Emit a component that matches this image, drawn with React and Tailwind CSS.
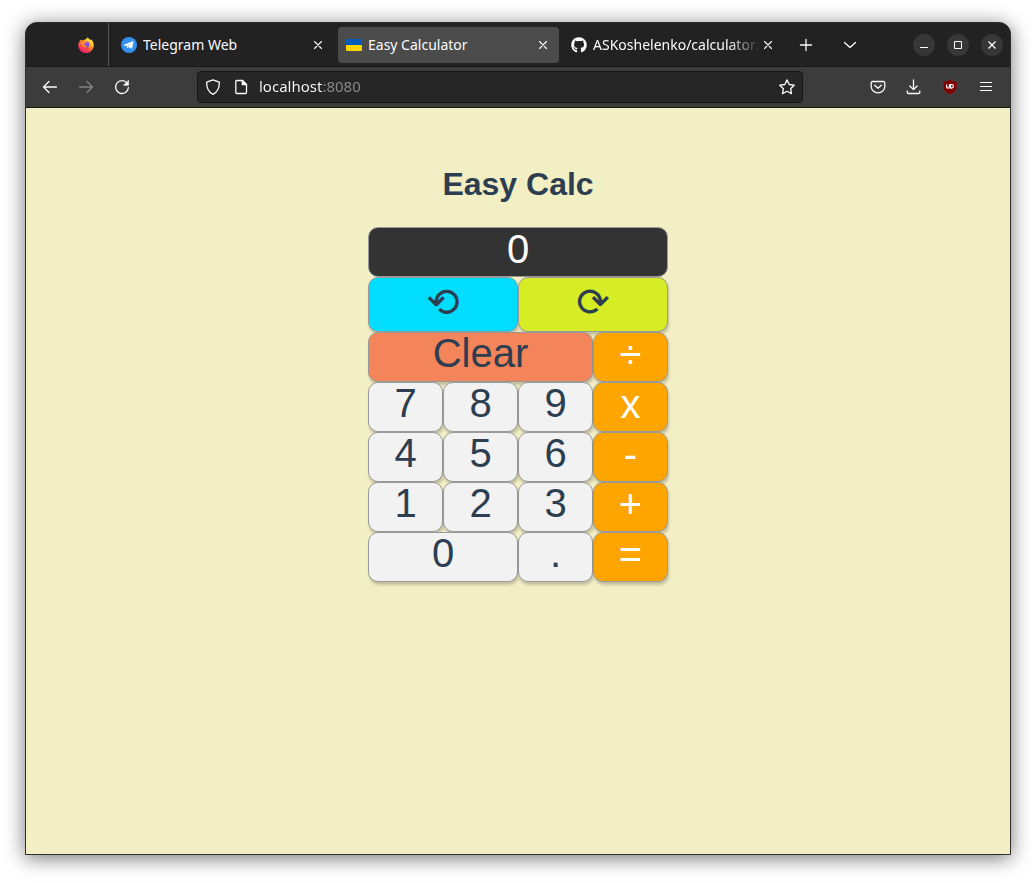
import { FaGithub } from "react-icons/fa";

const digit = "bg-[#f2f2f2] text-[#2c3e50] leading-10";
const operator = "bg-[#ffa500] text-white leading-[42px]";

const keys = [
  { label: "Clear", className: "col-span-3 bg-[#f48459] text-[#2c3e50] leading-10" },
  { label: "÷", className: operator },
  { label: "7", className: digit },
  { label: "8", className: digit },
  { label: "9", className: digit },
  { label: "x", className: operator },
  { label: "4", className: digit },
  { label: "5", className: digit },
  { label: "6", className: digit },
  { label: "-", className: operator },
  { label: "1", className: digit },
  { label: "2", className: digit },
  { label: "3", className: digit },
  { label: "+", className: operator },
  { label: "0", className: "col-span-2 bg-[#f2f2f2] text-[#2c3e50] leading-10" },
  { label: ".", className: digit },
  { label: "=", className: operator },
];

function Line({ children, size = 16, className = "" }) {
  return (
    <svg
      width={size}
      height={size}
      viewBox="0 0 16 16"
      fill="none"
      stroke="currentColor"
      strokeWidth="1.3"
      strokeLinecap="round"
      strokeLinejoin="round"
      aria-hidden="true"
      className={`shrink-0 ${className}`}
    >
      {children}
    </svg>
  );
}

function FirefoxLogo() {
  return (
    <svg width="16" height="16" viewBox="0 0 16 16" aria-hidden="true">
      <defs>
        <linearGradient id="flame" x1="0.85" y1="0.05" x2="0.25" y2="0.95">
          <stop offset="0" stopColor="#fff14a" />
          <stop offset="0.35" stopColor="#ffb62b" />
          <stop offset="0.62" stopColor="#ff5a36" />
          <stop offset="1" stopColor="#f0147a" />
        </linearGradient>
        <radialGradient id="globe" cx="0.6" cy="0.3" r="0.8">
          <stop offset="0" stopColor="#9a4dff" />
          <stop offset="1" stopColor="#5b3bd1" />
        </radialGradient>
      </defs>
      <path
        d="M10 0.200c.5 1.400 1.500 2 2.600 3 .3-.4.2-.8.1-1.200 1.900 1.500 3.100 3.900 3.100 6.400a7.800 7.600 0 0 1-15.600.2c0-2 .6-3.500 1.600-4.700l.2-1.400 1.300 1c.7-.2 1.400-.2 2 0 .7-.8 1.500-1.200 2.300-1.300C8.600 1.700 9.200.9 10 .2z"
        fill="url(#flame)"
      />
      <circle cx="8.300" cy="7.600" r="3" fill="url(#globe)" />
      <path
        d="M2.800 4.200c1.500-.7 2.500-.3 3.300.3l2.500.6c0 1-1 1.200-1.800 1.500-.5.2-.6.7-.5 1.200.7 1.500 2.400.8 3.300.7-.7 1.700-3.500 2.300-4.900.7C3.300 7.900 3 6 2.800 4.200z"
        fill="#ff8a26"
      />
    </svg>
  );
}

function TelegramLogo() {
  return (
    <svg width="16" height="16" viewBox="0 0 16 16" aria-hidden="true" className="shrink-0">
      <circle cx="8" cy="8" r="8" fill="#3390ec" />
      <path
        d="M3 7.800 11.600 4.200c.6-.2.900.1.800.7l-1.300 6.300c-.1.600-.5.700-1 .4L7.900 10l-1.200 1.100c-.2.200-.5.100-.6-.2l-.5-2L3 8.400c-.4-.1-.4-.4 0-.6z"
        fill="#fff"
      />
      <path d="M6.100 10.400 6.300 8.800 10.200 5.900 7.200 9.400z" fill="#3390ec" opacity="0.55" />
    </svg>
  );
}

function FlagIcon() {
  return (
    <svg width="16" height="16" viewBox="0 0 16 16" aria-hidden="true" className="shrink-0">
      <path d="M1 2h14a1 1 0 0 1 1 1v5H0V3a1 1 0 0 1 1-1z" fill="#005bbb" />
      <path d="M0 8h16v5a1 1 0 0 1-1 1H1a1 1 0 0 1-1-1z" fill="#ffd500" />
    </svg>
  );
}

function Tab({ icon, title, active = false, fade = false }) {
  return (
    <div
      className={`flex h-9 max-w-[221px] min-w-0 flex-1 items-center rounded pr-2 pl-2 ${active ? "bg-[#4b4b4b]" : ""}`}
    >
      <button type="button" className="flex min-w-0 flex-1 items-center gap-[6px] text-left">
        {icon}
        <span
          className={`min-w-0 flex-1 overflow-hidden whitespace-nowrap ${fade ? "[mask-image:linear-gradient(to_left,transparent,black_32px)]" : ""}`}
        >
          {title}
        </span>
      </button>
      <button type="button" aria-label={`Close ${title}`} className="grid h-4 w-4 place-items-center">
        <Line size={16}>
          <path d="M4.500 4.500l7 7M11.500 4.500l-7 7" strokeWidth="1.100" />
        </Line>
      </button>
    </div>
  );
}

function ToolButton({ label, children, className = "" }) {
  return (
    <button type="button" aria-label={label} className={`grid h-8 w-9 place-items-center ${className}`}>
      {children}
    </button>
  );
}

function WindowButton({ label, children }) {
  return (
    <button type="button" aria-label={label} className="grid h-[22px] w-[22px] place-items-center rounded-full bg-[#373737]">
      <svg width="16" height="16" viewBox="0 0 16 16" fill="none" stroke="#fff" aria-hidden="true">
        {children}
      </svg>
    </button>
  );
}

function TabBar() {
  return (
    <div className="flex h-11 items-center border-b border-[#171717] bg-[#222222]">
      <div className="flex h-full w-[83px] shrink-0 items-center justify-end border-r border-[#575757] pr-[14px]">
        <FirefoxLogo />
      </div>
      <div className="flex min-w-0 flex-1 items-center gap-1 pl-1">
        <Tab icon={<TelegramLogo />} title="Telegram Web" />
        <Tab icon={<FlagIcon />} title="Easy Calculator" active />
        <Tab
          icon={<FaGithub size={16} className="shrink-0" aria-hidden="true" />}
          title="ASKoshelenko/calculator:"
          fade
        />
        <button type="button" aria-label="New tab" className="grid h-9 w-9 shrink-0 place-items-center">
          <Line>
            <path d="M8 2.500v11M2.500 8h11" />
          </Line>
        </button>
        <button type="button" aria-label="List all tabs" className="ml-1 grid h-9 w-9 shrink-0 place-items-center">
          <Line>
            <path d="M2.500 5.500 8 10.500l5.500-5" />
          </Line>
        </button>
      </div>
      <div className="flex shrink-0 gap-3 pr-[7px]">
        <WindowButton label="Minimize">
          <path d="M4 10.500h8" />
        </WindowButton>
        <WindowButton label="Maximize">
          <path d="M4.500 4.500h7v7h-7z" />
        </WindowButton>
        <WindowButton label="Close window">
          <path d="M4.500 4.500l7 7M11.500 4.500l-7 7" strokeWidth="1.300" />
        </WindowButton>
      </div>
    </div>
  );
}

function Toolbar() {
  return (
    <div className="flex h-[41px] items-center justify-between border-b border-[#171717] bg-[#3c3c3c] pr-[6px] pl-[6px]">
      <div className="flex shrink-0">
        <ToolButton label="Back">
          <Line>
            <path d="M14.500 8h-13M7 2.500 1.500 8 7 13.500" />
          </Line>
        </ToolButton>
        <ToolButton label="Forward" className="text-[#838383]">
          <Line>
            <path d="M1.500 8h13M9 2.500 14.500 8 9 13.500" />
          </Line>
        </ToolButton>
        <ToolButton label="Reload">
          <Line>
            <path d="M13.200 4.300A6.400 6.400 0 1 0 14.400 8.600" />
            <path d="M14.500 1.500v4.800H9.700z" fill="currentColor" strokeWidth="0.600" />
          </Line>
        </ToolButton>
      </div>
      <div className="mx-[57px] flex h-8 min-w-0 flex-1 items-center rounded border border-[#171717] bg-[#262626] px-[7px]">
        <Line>
          <path d="M8 .8 14.300 3.200C14.500 9 12.500 13 8 15.300 3.500 13 1.500 9 1.700 3.200z" />
        </Line>
        <Line className="ml-3">
          <path d="M3.800 1.500h5.700l4 4v8a1 1 0 0 1-1 1H3.800a1 1 0 0 1-1-1v-11a1 1 0 0 1 1-1z" />
          <path d="M9.300 1.500v4.200h4.200z" fill="currentColor" />
        </Line>
        <input
          type="text"
          aria-label="Address"
          defaultValue="localhost:8080"
          className="ml-[10px] min-w-0 flex-1 bg-[linear-gradient(to_right,#fbfbfe_63px,#8b8b8b_63px)] bg-clip-text text-[15px] text-transparent outline-none"
        />
        <button type="button" aria-label="Bookmark this page">
          <Line>
            <path d="M8 .9l2.200 4.600 5 .7-3.600 3.500.9 5L8 12.300l-4.500 2.400.9-5L.8 6.200l5-.7z" />
          </Line>
        </button>
      </div>
      <div className="flex shrink-0">
        <ToolButton label="Save to Pocket">
          <Line>
            <path d="M2.500 2.500h11a1.300 1.300 0 0 1 1.300 1.300V7.500a6.800 6.300 0 0 1-13.600 0V3.800a1.300 1.300 0 0 1 1.300-1.300z" />
            <path d="M4.700 6.300 8 9.300l3.300-3" />
          </Line>
        </ToolButton>
        <ToolButton label="Downloads">
          <Line>
            <path d="M7.500 .8v9.700M3.800 7 7.500 10.600 11.200 7M1.200 12v1.200a1.300 1.300 0 0 0 1.300 1.300h10a1.300 1.300 0 0 0 1.300-1.300V12" />
          </Line>
        </ToolButton>
        <ToolButton label="uBlock Origin">
          <svg width="16" height="16" viewBox="0 0 16 16" fill="none" aria-hidden="true">
            <path
              d="M8 .3c2 1.300 4 2 7 2.100v4.800c0 4.300-3.400 6.700-7 8.500-3.600-1.800-7-4.200-7-8.500V2.400C4 2.300 6 1.600 8 .3z"
              fill="#800000"
              stroke="#5a5a5a"
              strokeWidth="0.400"
            />
            <path d="M4.600 5.500v2.200a1.400 1.400 0 0 0 2.800 0V5.500M8.600 5.500v3.600h1a1.800 1.800 0 0 0 0-3.600z" stroke="#fff" strokeWidth="1.200" />
          </svg>
        </ToolButton>
        <ToolButton label="Open application menu">
          <svg width="16" height="16" viewBox="0 0 16 16" stroke="currentColor" aria-hidden="true">
            <path d="M2 3.500h12M2 7.500h12M2 11.500h12" />
          </svg>
        </ToolButton>
      </div>
    </div>
  );
}

const keyBase =
  "flex items-start justify-center rounded-[10px] border border-[#999999] text-[40px] shadow-[1px_3px_3px_rgba(0,0,0,0.2)]";

function Calculator() {
  return (
    <main className="flex flex-1 flex-col items-center bg-[#f3efc5] pt-[60px] font-['Liberation_Sans',Arial,sans-serif]">
      <h1 className="mb-[27px] text-[32px] leading-8 font-bold text-[#2c3e50]">Easy Calc</h1>
      <div className="grid w-[300px] grid-cols-4">
        <output
          aria-label="Result"
          className="col-span-4 h-[50px] rounded-[10px] border border-[#999999] bg-[#333333] text-center text-[40px] leading-[42px] text-white"
        >
          0
        </output>
        <button
          type="button"
          aria-label="Undo"
          className={`${keyBase} col-span-2 h-[55px] bg-[#00ddff] pt-1 font-['DejaVu_Sans',sans-serif] leading-10 text-[#2c3e50]`}
        >
          ⟲
        </button>
        <button
          type="button"
          aria-label="Redo"
          className={`${keyBase} col-span-2 h-[55px] bg-[#d6ec24] pt-1 font-['DejaVu_Sans',sans-serif] leading-10 text-[#2c3e50]`}
        >
          ⟳
        </button>
        {keys.map((key) => (
          <button key={key.label} type="button" className={`${keyBase} h-[50px] ${key.className}`}>
            {key.label}
          </button>
        ))}
      </div>
    </main>
  );
}

export default function App() {
  return (
    <div className="flex min-h-screen flex-col bg-white px-[25px] pt-[22px] pb-7">
      <div className="flex flex-1 flex-col overflow-hidden rounded-t-xl border border-[#2e2e2e] bg-[#222222] font-['Noto_Sans',sans-serif] text-sm text-[#fbfbfe] shadow-[0_3px_20px_rgba(0,0,0,0.55)]">
        <TabBar />
        <Toolbar />
        <Calculator />
      </div>
    </div>
  );
}
